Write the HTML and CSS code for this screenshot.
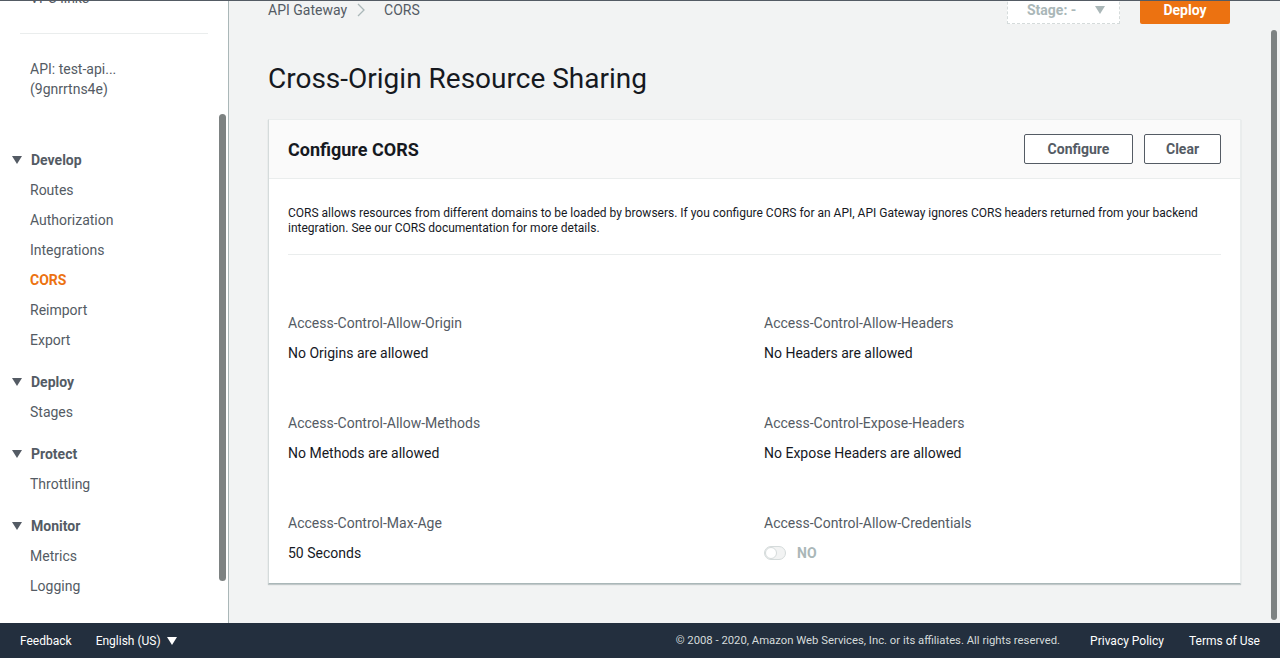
FILE: index.html
```html
<!DOCTYPE html>
<html lang="en">
<head>
<meta charset="utf-8">
<title>Cross-Origin Resource Sharing</title>
<link rel="stylesheet" href="styles.css">
</head>
<body>
<div class="app">
  <div class="layout">
    <aside class="sidebar">
      <div class="side-top">VPC links</div>
      <div class="side-div"></div>
      <div class="api-name">API: test-api...<br>(9gnrrtns4e)</div>
      <section class="nav-group">
        <div class="nav-head"><span class="caret"></span>Develop</div>
        <ul class="nav-list">
          <li>Routes</li>
          <li>Authorization</li>
          <li>Integrations</li>
          <li class="active">CORS</li>
          <li>Reimport</li>
          <li>Export</li>
        </ul>
      </section>
      <section class="nav-group">
        <div class="nav-head"><span class="caret"></span>Deploy</div>
        <ul class="nav-list"><li>Stages</li></ul>
      </section>
      <section class="nav-group">
        <div class="nav-head"><span class="caret"></span>Protect</div>
        <ul class="nav-list"><li>Throttling</li></ul>
      </section>
      <section class="nav-group">
        <div class="nav-head"><span class="caret"></span>Monitor</div>
        <ul class="nav-list"><li>Metrics</li><li>Logging</li></ul>
      </section>
      <div class="side-scroll"></div>
    </aside>
    <main class="main">
      <div class="topbar">
        <nav class="crumbs">
          <span>API Gateway</span>
          <svg class="chev" width="10" height="16" viewBox="0 0 10 16"><path d="M2 2 L8 8 L2 14" fill="none" stroke="#aab7b8" stroke-width="1.3"/></svg>
          <span>CORS</span>
        </nav>
        <div class="actions">
          <div class="stage-select">Stage: - <span class="tri"></span></div>
          <button class="btn-primary">Deploy</button>
        </div>
      </div>
      <h1 class="title">Cross-Origin Resource Sharing</h1>
      <div class="panel">
        <div class="panel-head">
          <h2>Configure CORS</h2>
          <div class="panel-btns">
            <button class="btn btn-configure">Configure</button>
            <button class="btn btn-clear">Clear</button>
          </div>
        </div>
        <div class="panel-body">
          <p class="desc">CORS allows resources from different domains to be loaded by browsers. If you configure CORS for an API, API Gateway ignores CORS headers returned from your backend integration. See our CORS documentation for more details.</p>
          <div class="fields">
            <div class="field"><div class="label">Access-Control-Allow-Origin</div><div class="value">No Origins are allowed</div></div>
            <div class="field"><div class="label">Access-Control-Allow-Headers</div><div class="value">No Headers are allowed</div></div>
            <div class="field"><div class="label">Access-Control-Allow-Methods</div><div class="value">No Methods are allowed</div></div>
            <div class="field"><div class="label">Access-Control-Expose-Headers</div><div class="value">No Expose Headers are allowed</div></div>
            <div class="field"><div class="label">Access-Control-Max-Age</div><div class="value">50 Seconds</div></div>
            <div class="field"><div class="label">Access-Control-Allow-Credentials</div><div class="value toggle-row"><span class="toggle"><span class="knob"></span></span><span class="no">NO</span></div></div>
          </div>
        </div>
      </div>
    </main>
    <div class="page-scroll"></div>
  </div>
  <footer class="footer">
    <div class="foot-left">
      <span>Feedback</span>
      <span class="lang">English (US) <span class="tri-w"></span></span>
    </div>
    <div class="foot-right">
      <span class="copy">© 2008 - 2020, Amazon Web Services, Inc. or its affiliates. All rights reserved.</span>
      <span class="flink">Privacy Policy</span>
      <span class="flink">Terms of Use</span>
    </div>
  </footer>
</div>
</body>
</html>
```

FILE: styles.css
```css
* { box-sizing: border-box; }
html, body { margin: 0; padding: 0; }
body {
  font-family: Roboto, "Noto Sans", Arial, sans-serif;
  color: #16191f;
  background: #f2f3f3;
  overflow: hidden;
}
.app {
  height: 658px;
  display: flex;
  flex-direction: column;
  border-top: 1px solid #545b64;
}
.layout {
  flex: 1;
  display: flex;
  position: relative;
  overflow: hidden;
}
.sidebar {
  width: 229px;
  flex: none;
  background: #fff;
  border-right: 1px solid #aab7b8;
  padding: 0 20px 0 0;
  position: relative;
}
.side-top {
  margin-top: -13px;
  padding-left: 30px;
  font-size: 14px;
  line-height: 20px;
  color: #545b64;
}
.side-div {
  margin: 25px 0 0 20px;
  width: 188px;
  border-top: 1px solid #eaeded;
}
.api-name {
  margin-top: 25px;
  padding-left: 30px;
  font-size: 14px;
  line-height: 20px;
  color: #545b64;
}
.nav-group { margin-bottom: 11px; }
.nav-group:first-of-type { margin-top: 45px; }
.nav-head {
  display: flex;
  align-items: center;
  height: 31px;
  padding-left: 12px;
  font-size: 14px;
  font-weight: 700;
  color: #545b64;
}
.caret {
  width: 0; height: 0;
  border-left: 5px solid transparent;
  border-right: 5px solid transparent;
  border-top: 8px solid #545b64;
  margin-right: 9px;
}
.nav-list { list-style: none; margin: 0; padding: 0; }
.nav-list li {
  height: 30px;
  line-height: 30px;
  padding-left: 30px;
  font-size: 14px;
  color: #545b64;
}
.nav-list li.active { color: #ec7211; font-weight: 700; }
.side-scroll {
  position: absolute;
  right: 2px;
  top: 113px;
  width: 7px;
  height: 467px;
  border-radius: 4px;
  background: #7d8282;
}
.main {
  flex: 1;
  padding: 0 39px 0 39px;
}
.topbar {
  display: flex;
  justify-content: space-between;
  align-items: flex-end;
  margin-top: -9px;
  height: 32px;
}
.crumbs {
  display: flex;
  align-items: center;
  gap: 9px;
  font-size: 14px;
  color: #545b64;
  padding-bottom: 6px;
}
.crumbs .chev { margin: 0 9px 0 0; }
.actions {
  display: flex;
  align-items: flex-end;
  gap: 20px;
  margin-right: 11px;
}
.stage-select {
  width: 113px;
  height: 32px;
  border: 1px dashed #d5dbdb;
  background: #fff;
  display: flex;
  align-items: flex-end;
  padding: 0 0 5px 19px;
  font-size: 14px;
  font-weight: 700;
  color: #aab7b8;
}
.tri {
  display: inline-block;
  width: 0; height: 0;
  border-left: 5px solid transparent;
  border-right: 5px solid transparent;
  border-top: 8px solid #aab7b8;
  margin: 0 0 4px 19px;
}
.btn-primary {
  width: 90px;
  height: 32px;
  border: none;
  border-radius: 2px;
  background: #ec7211;
  color: #fff;
  font-family: inherit;
  font-size: 14px;
  font-weight: 700;
  padding: 3px 0 0;
  line-height: 16px;
}
.title {
  margin: 38px 0 23px;
  font-size: 28px;
  line-height: 34px;
  font-weight: 400;
  color: #16191f;
}
.panel {
  background: #fff;
  border: 1px solid #eaeded;
  border-left-color: #d5dbdb;
  border-bottom-color: #aab7b8;
  box-shadow: 0 1px 1px rgba(0,28,36,0.2);
}
.panel-head {
  height: 59px;
  background: #fafafa;
  border-bottom: 1px solid #eaeded;
  display: flex;
  justify-content: space-between;
  align-items: center;
  padding: 0 19px;
}
.panel-head h2 {
  margin: 0;
  font-size: 18px;
  font-weight: 700;
  color: #16191f;
}
.panel-btns { display: flex; gap: 11px; }
.btn {
  height: 30px;
  border: 1px solid #545b64;
  border-radius: 2px;
  background: #fff;
  color: #545b64;
  font-family: inherit;
  font-size: 14px;
  font-weight: 700;
}
.btn-configure { width: 109px; }
.btn-clear { width: 77px; }
.panel-body { padding: 27px 19px 20px; }
.desc {
  margin: 0;
  font-size: 12px;
  line-height: 15px;
  color: #16191f;
  padding-bottom: 18px;
  border-bottom: 1px solid #eaeded;
}
.fields {
  display: grid;
  grid-template-columns: 476px 1fr;
  row-gap: 50px;
  padding-top: 58px;
}
.label {
  font-size: 14px;
  line-height: 20px;
  color: #545b64;
}
.value {
  margin-top: 10px;
  font-size: 14px;
  line-height: 20px;
  color: #16191f;
}
.toggle-row { display: flex; align-items: center; gap: 11px; }
.toggle {
  width: 22px;
  height: 14px;
  border-radius: 7px;
  border: 1px solid #d5dbdb;
  background: #f2f3f3;
  position: relative;
}
.knob {
  position: absolute;
  left: 0; top: 0;
  width: 12px; height: 12px;
  border-radius: 50%;
  background: #fff;
  border: 1px solid #d5dbdb;
}
.no { color: #aab7b8; font-weight: 700; font-size: 14px; }
.page-scroll {
  position: absolute;
  right: 3px;
  top: 29px;
  width: 6px;
  height: 590px;
  border-radius: 3px;
  background: #7d8282;
}
.footer {
  height: 35px;
  flex: none;
  background: #232f3e;
  color: #fff;
  font-size: 12px;
  display: flex;
  justify-content: space-between;
  align-items: center;
  padding: 0 20px;
}
.foot-left { display: flex; gap: 24px; align-items: center; }
.lang { display: inline-flex; align-items: center; gap: 6px; }
.tri-w {
  display: inline-block;
  width: 0; height: 0;
  border-left: 5px solid transparent;
  border-right: 5px solid transparent;
  border-top: 8px solid #fff;
}
.foot-right { display: flex; gap: 25px; align-items: center; }
.copy { color: #d5dbdb; margin-right: 5px; font-size: 11.3px; }
.flink { color: #fff; }
```
